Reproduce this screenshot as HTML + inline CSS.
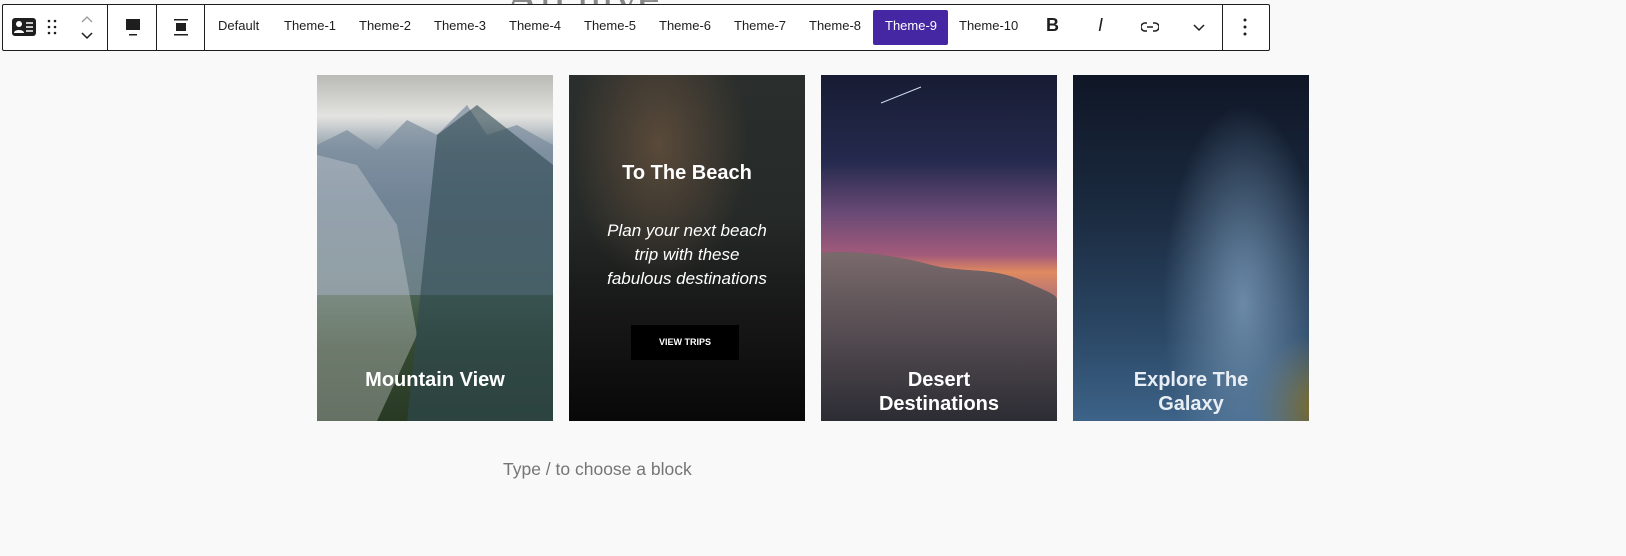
<!DOCTYPE html>
<html><head><meta charset="utf-8"><style>
body{margin:0;width:1626px;height:556px;background:#f9f9f9;font-family:"Liberation Sans",sans-serif;position:relative;overflow:hidden}
.title{position:absolute;left:505px;top:-30px;font-size:48px;color:#888;font-family:"Liberation Serif",serif}
.tb{position:absolute;left:2px;top:4px;width:1266px;height:45px;background:#fff;border:1px solid #1e1e1e;border-radius:2px;display:flex;align-items:center;font-size:13px;color:#1e1e1e}
.sep{position:absolute;top:0;bottom:0;width:1px;background:#1e1e1e}
.t{position:absolute;top:13px;font-size:13px}
.sel{position:absolute;left:870px;top:5px;width:75px;height:35px;background:#4527a4;border-radius:2px}
.card{position:absolute;top:75px;width:236px;height:346px;overflow:hidden;color:#fff;text-align:center}
.h{position:absolute;left:0;right:0;font-weight:bold;font-size:20px;line-height:24px}
</style></head><body>
<div class="title">Archive</div>
<div class="tb">
<svg style="position:absolute;left:9px;top:12px" width="24" height="20" viewBox="0 0 24 20"><rect x="0" y="1" width="24" height="18" rx="3" fill="#1e1e1e"/><circle cx="7" cy="7" r="3" fill="#fff"/><path d="M2 16c0-4 10-4 10 0z" fill="#fff"/><path d="M14 6h7M14 10h7M14 14h7" stroke="#fff" stroke-width="1.5"/></svg>
<svg style="position:absolute;left:44px;top:14px" width="10" height="16"><g fill="#1e1e1e"><circle cx="2" cy="2" r="1.3"/><circle cx="8" cy="2" r="1.3"/><circle cx="2" cy="8" r="1.3"/><circle cx="8" cy="8" r="1.3"/><circle cx="2" cy="14" r="1.3"/><circle cx="8" cy="14" r="1.3"/></g></svg>
<svg style="position:absolute;left:77px;top:10px" width="14" height="26"><path d="M2 7l5-5 5 5" stroke="#999" fill="none" stroke-width="1.3"/><path d="M2 18l5 5 5-5" stroke="#1e1e1e" fill="none" stroke-width="1.5"/></svg>
<div class="sep" style="left:104px"></div>
<svg style="position:absolute;left:122px;top:14px" width="16" height="18"><rect x="1" y="0" width="14" height="11" fill="#1e1e1e"/><rect x="4" y="15" width="8" height="1.5" fill="#1e1e1e"/></svg>
<div class="sep" style="left:153px"></div>
<svg style="position:absolute;left:170px;top:14px" width="16" height="18"><rect x="1" y="0" width="14" height="1.5" fill="#1e1e1e"/><rect x="3" y="4" width="10" height="8" fill="#1e1e1e"/><rect x="1" y="15" width="14" height="1.5" fill="#1e1e1e"/></svg>
<div class="sep" style="left:201px"></div>
<div class="sel"></div>
<span class="t" style="left:215px">Default</span>
<span class="t" style="left:281px">Theme-1</span>
<span class="t" style="left:356px">Theme-2</span>
<span class="t" style="left:431px">Theme-3</span>
<span class="t" style="left:506px">Theme-4</span>
<span class="t" style="left:581px">Theme-5</span>
<span class="t" style="left:656px">Theme-6</span>
<span class="t" style="left:731px">Theme-7</span>
<span class="t" style="left:806px">Theme-8</span>
<span class="t" style="left:882px;color:#fff">Theme-9</span>
<span class="t" style="left:956px">Theme-10</span>
<span class="t" style="left:1043px;top:10px;font-weight:bold;font-size:18px">B</span>
<span class="t" style="left:1095px;top:10px;font-style:italic;font-size:18px">I</span>
<svg style="position:absolute;left:1138px;top:16px" width="18" height="12"><path d="M6 2H4a4 4 0 000 8h2M12 2h2a4 4 0 010 8h-2M6 6h6" stroke="#1e1e1e" fill="none" stroke-width="1.5"/></svg>
<svg style="position:absolute;left:1190px;top:19px" width="12" height="8"><path d="M1 1l5 5 5-5" stroke="#1e1e1e" fill="none" stroke-width="1.5"/></svg>
<div class="sep" style="left:1219px"></div>
<svg style="position:absolute;left:1240px;top:13px" width="4" height="18"><g fill="#1e1e1e"><circle cx="2" cy="2" r="1.5"/><circle cx="2" cy="9" r="1.5"/><circle cx="2" cy="16" r="1.5"/></g></svg>
</div>

<div class="card" style="left:317px;background:linear-gradient(180deg,#b9b9b6 0%,#e3e3e0 12%,#8a9aa8 22%,#5d7488 36%,#506a5c 58%,#34472f 80%,#283a24 100%)">
<svg style="position:absolute;left:0;top:0" width="236" height="346"><path d="M0 70L30 55 60 75 90 45 120 60 150 30 170 60 200 50 236 70V220H0z" fill="#7a8c9c" opacity=".7"/><path d="M0 80L40 90 80 150 100 260 60 346H0z" fill="#d6dadc" opacity=".35"/><path d="M120 60L160 30 236 90V346H90z" fill="#2f4a52" opacity=".6"/></svg>
<div class="h" style="top:293px">Mountain View</div></div>

<div class="card" style="left:569px;background:radial-gradient(ellipse 90px 140px at 90px 70px,#5a4a3a,transparent),linear-gradient(180deg,#2a2e2c 0%,#262a28 40%,#161716 70%,#080808 100%)">
<div class="h" style="top:86px">To The Beach</div>
<div style="position:absolute;left:0;right:0;top:144px;font-style:italic;font-size:17px;line-height:24px">Plan your next beach<br>trip with these<br>fabulous destinations</div>
<div style="position:absolute;left:62px;top:250px;width:108px;height:35px;background:#000;font-size:9px;font-weight:bold;line-height:35px">VIEW TRIPS</div></div>

<div class="card" style="left:821px;background:linear-gradient(180deg,#171c33 0%,#252a4e 25%,#6a4a76 40%,#a25a7a 52%,#e08a60 57%,#c07a70 62%,#9a7080 75%,#6a5a68 100%)">
<svg style="position:absolute;left:0;top:0" width="236" height="346"><path d="M0 178C40 175 80 182 110 190S170 192 200 205 236 220 236 225V346H0z" fill="#5a5258"/><path d="M0 178C40 175 80 182 110 190S170 192 200 205 236 220 236 225V346H0z" fill="url(#g)"/><defs><linearGradient id="g" x1="0" y1="0" x2="0" y2="1"><stop offset="0" stop-color="#7a6a6c"/><stop offset="1" stop-color="#2c2c34"/></linearGradient></defs><path d="M60 28L100 12" stroke="#cde" stroke-width="1"/></svg>
<div class="h" style="top:293px">Desert<br>Destinations</div></div>

<div class="card" style="left:1073px;background:radial-gradient(ellipse 80px 200px at 170px 230px,#6b8aa8,transparent),radial-gradient(ellipse 60px 70px at 240px 330px,#7a6a2a,transparent),linear-gradient(180deg,#0f1626 0%,#1b2b40 40%,#2b4866 75%,#3d6388 100%)">
<div class="h" style="top:293px;color:#e8eef4">Explore The<br>Galaxy</div></div>

<div style="position:absolute;left:503px;top:459px;font-size:17.5px;color:#757575">Type / to choose a block</div>
</body></html>
